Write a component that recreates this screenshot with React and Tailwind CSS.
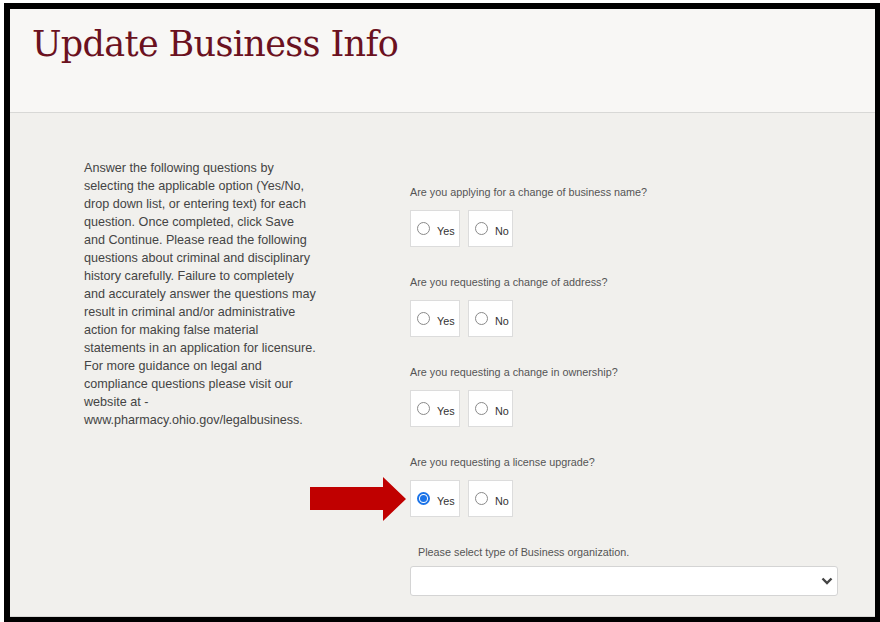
import React from "react";

const questions = [
  { text: "Are you applying for a change of business name?", value: null },
  { text: "Are you requesting a change of address?", value: null },
  { text: "Are you requesting a change in ownership?", value: null },
  { text: "Are you requesting a license upgrade?", value: "yes", arrow: true },
];

const Radio = ({ checked }) =>
  checked ? (
    <span className="flex h-[13px] w-[13px] items-center justify-center rounded-full border-[2px] border-[#1a73e8] bg-white">
      <span className="h-[7px] w-[7px] rounded-full bg-[#1a73e8]" />
    </span>
  ) : (
    <span className="h-[13px] w-[13px] rounded-full border border-[#8a8a8a] bg-white" />
  );

const Choice = ({ label, checked, width }) => (
  <label
    className={`flex h-[37px] items-center gap-[7px] border border-[#dcdcdc] bg-white pl-[6px] ${width}`}
  >
    <Radio checked={checked} />
    <span className="mt-[5px] text-[10.8px] text-[#333]">{label}</span>
  </label>
);

const Arrow = () => (
  <svg width="96" height="44" viewBox="0 0 96 44" className="absolute left-[-100px] top-[-3px]">
    <polygon points="0,10 73,10 73,0 96,22 73,44 73,33 0,33" fill="#c00000" />
  </svg>
);

const Question = ({ text, value, arrow }) => (
  <div className="mb-[28px]">
    <p className="mb-[11px] h-[14px] text-[10.8px] leading-[14px] text-[#555]">{text}</p>
    <div className="relative flex gap-[8px]">
      {arrow && <Arrow />}
      <Choice label="Yes" checked={value === "yes"} width="w-[50px]" />
      <Choice label="No" checked={value === "no"} width="w-[45px]" />
    </div>
  </div>
);

export default function App() {
  return (
    <div className="h-[622px] w-[880px] overflow-hidden bg-white pl-[4px] pt-[3px] font-['Liberation_Sans',Arial,sans-serif]">
      <div className="flex h-[619px] w-[876px] flex-col border-b-[5px] border-l-[6px] border-r-[5px] border-t-[6px] border-black bg-[#f1f0ed]">
        <header className="h-[104px] shrink-0 border-b border-[#d8d8d6] bg-[#f8f7f5] pl-[22px] pt-[15px]">
          <h1 className="font-['DejaVu_Serif',serif] text-[35px] leading-[40px] tracking-[-0.65px] text-[#6b1120]">
            Update Business Info
          </h1>
        </header>
        <main className="flex flex-1 border-b border-[#d8d8d6]">
          <div className="ml-[74px] w-[234px] shrink-0 pt-[46px] text-[12.6px] leading-[18px] text-[#444]">
            Answer the following questions by selecting the applicable option (Yes/No, drop down
            list, or entering text) for each question. Once completed, click Save and Continue.
            Please read the following questions about criminal and disciplinary history carefully.
            Failure to completely and accurately answer the questions may result in criminal and/or
            administrative action for making false material statements in an application for
            licensure. For more guidance on legal and compliance questions please visit our website
            at - www.pharmacy.ohio.gov/legalbusiness.
          </div>
          <div className="ml-[92px] w-[428px] pt-[72px]">
            {questions.map((q) => (
              <Question key={q.text} {...q} />
            ))}
            <p className="mb-[7px] ml-[8px] mt-[2px] h-[14px] text-[10.8px] leading-[14px] text-[#555]">
              Please select type of Business organization.
            </p>
            <div className="flex h-[30px] items-center justify-end rounded-[3px] border border-[#d4d4d4] bg-white pr-[4px]">
              <svg width="12" height="8" viewBox="0 0 12 8">
                <path d="M1.5 1.5 L6 6 L10.5 1.5" fill="none" stroke="#444" strokeWidth="2.4" />
              </svg>
            </div>
          </div>
        </main>
      </div>
    </div>
  );
}
